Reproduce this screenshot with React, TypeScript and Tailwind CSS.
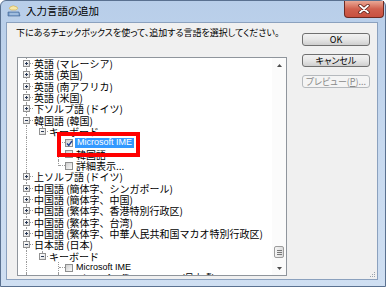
import React from 'react';

type Kind = 'plus' | 'minus' | 'check' | 'checked';
interface Row {
  level: number;
  text: string;
  kind: Kind;
  selected?: boolean;
  last?: boolean;
}

const rows: Row[] = [
  { level: 0, text: '英語 (マレーシア)', kind: 'plus' },
  { level: 0, text: '英語 (英国)', kind: 'plus' },
  { level: 0, text: '英語 (南アフリカ)', kind: 'plus' },
  { level: 0, text: '英語 (米国)', kind: 'plus' },
  { level: 0, text: '下ソルブ語 (ドイツ)', kind: 'plus' },
  { level: 0, text: '韓国語 (韓国)', kind: 'minus' },
  { level: 1, text: 'キーボード', kind: 'minus' },
  { level: 2, text: 'Microsoft IME', kind: 'checked', selected: true },
  { level: 2, text: '韓国語', kind: 'check' },
  { level: 2, text: '詳細表示...', kind: 'check', last: true },
  { level: 0, text: '上ソルブ語 (ドイツ)', kind: 'plus' },
  { level: 0, text: '中国語 (簡体字、シンガポール)', kind: 'plus' },
  { level: 0, text: '中国語 (簡体字、中国)', kind: 'plus' },
  { level: 0, text: '中国語 (繁体字、香港特別行政区)', kind: 'plus' },
  { level: 0, text: '中国語 (繁体字、台湾)', kind: 'plus' },
  { level: 0, text: '中国語 (繁体字、中華人民共和国マカオ特別行政区)', kind: 'plus' },
  { level: 0, text: '日本語 (日本)', kind: 'minus' },
  { level: 1, text: 'キーボード', kind: 'minus' },
  { level: 2, text: 'Microsoft IME', kind: 'check' },
  { level: 2, text: 'Microsoft Office IME 2007 (日本語)', kind: 'check' },
];

function Expander({ open }: { open: boolean }) {
  return (
    <span className="absolute top-[2px] w-[7px] h-[7px] border border-[#919191] bg-gradient-to-br from-white to-[#dedede] flex items-center justify-center">
      <span className="absolute left-[1px] top-[2px] w-[3px] h-[1px] bg-[#2b3a55]" />
      {!open && <span className="absolute left-[2px] top-[1px] w-[1px] h-[3px] bg-[#2b3a55]" />}
    </span>
  );
}

function Check({ checked }: { checked: boolean }) {
  return (
    <span className="relative shrink-0 w-[8px] h-[8px] border border-[#8e8f8f] bg-gradient-to-br from-[#cfcfcf] to-[#fafafa] flex items-center justify-center">
      {checked && (
        <svg width="7" height="7" viewBox="0 0 7 7" className="absolute left-0 top-0">
          <path d="M1 3.5 L2.8 5.5 L6 1" stroke="#1f3f8f" strokeWidth="1.4" fill="none" />
        </svg>
      )}
    </span>
  );
}

function TreeRow({ row }: { row: Row }) {
  const dot = 'absolute border-dotted border-[#9a9a9a]';
  const latin = "font-['Liberation_Sans','Noto_Sans_CJK_JP',sans-serif] text-[9px]";
  return (
    <div className="relative h-[11.33px] shrink-0 flex items-center whitespace-nowrap text-[10px] leading-[11px] text-black [font-feature-settings:normal]">
      {/* level 0 vertical line */}
      <span className={`${dot} left-[8px] top-0 bottom-0 border-l`} />
      {row.level === 0 && (
        <>
          <span className={`${dot} left-[9px] top-[5px] w-[6px] border-t`} />
          <span className="absolute left-[5px] top-0 h-full">
            <Expander open={row.kind === 'minus'} />
          </span>
        </>
      )}
      {row.level === 1 && (
        <>
          <span className={`${dot} left-[24px] top-0 h-[6px] border-l`} />
          <span className={`${dot} left-[25px] top-[5px] w-[5px] border-t`} />
          <span className="absolute left-[21px] top-0 h-full">
            <Expander open={row.kind === 'minus'} />
          </span>
        </>
      )}
      {row.level === 2 && (
        <>
          <span className={`${dot} left-[40px] top-0 ${row.last ? 'h-[6px]' : 'bottom-0'} border-l`} />
          <span className={`${dot} left-[41px] top-[5px] w-[6px] border-t`} />
        </>
      )}
      {row.level === 0 && <span className="pl-[16px]">{row.text}</span>}
      {row.level === 1 && <span className="pl-[31px]">{row.text}</span>}
      {row.level === 2 && (
        <span className="pl-[47px] flex items-center h-full">
          <Check checked={row.kind === 'checked'} />
          {row.selected ? (
            <span className={`ml-[2px] h-[10px] px-[2px] flex items-center bg-[#3399ff] text-white ${latin}`}>
              {row.text}
            </span>
          ) : (
            <span className={`ml-[3px] ${row.text.startsWith('Microsoft') ? latin : ''}`}>{row.text}</span>
          )}
        </span>
      )}
    </div>
  );
}

function Arrow({ up }: { up: boolean }) {
  return (
    <div className="h-[14px] shrink-0 flex items-center justify-center">
      <svg width="5" height="3" viewBox="0 0 5 3">
        {up ? <path d="M0 3 L2.5 0 L5 3 Z" fill="#4d4d4d" /> : <path d="M0 0 L2.5 3 L5 0 Z" fill="#4d4d4d" />}
      </svg>
    </div>
  );
}

function Button({ children, disabled }: { children: React.ReactNode; disabled?: boolean }) {
  return disabled ? (
    <div className="w-[68px] h-[13px] rounded-[3px] border border-[#b5b9bd] bg-[#f4f4f4] flex items-center justify-center text-[9px] leading-none text-[#8a8a8a]">
      {children}
    </div>
  ) : (
    <div className="w-[68px] h-[13px] rounded-[3px] border border-[#707070] bg-gradient-to-b from-[#f2f2f2] via-[#e6e6e6] to-[#cfcfcf] flex items-center justify-center text-[9px] leading-none text-black">
      {children}
    </div>
  );
}

export default function App() {
  return (
    <div className="w-[386px] h-[287px] overflow-hidden bg-white">
      <div className="relative w-[386px] h-[287px] flex flex-col rounded-t-[6px] border border-[#5a7190] bg-gradient-to-b from-[#b8cee9] via-[#c7d9ef] to-[#cfdff2] font-['Noto_Sans_CJK_JP',sans-serif] [font-feature-settings:'palt']">
        {/* Title bar */}
        <div className="h-[21px] shrink-0 flex items-start">
          <div className="flex-1 h-[21px] flex items-center pl-[6px] gap-[5px]">
            <svg width="14" height="13" viewBox="0 0 14 13">
              <path d="M3 2 Q6 -0.5 10 2 Q12 3.5 9 5 L4 5 Q1 4 3 2 Z" fill="#f6e7a8" stroke="#c9a94a" strokeWidth="0.6" />
              <path d="M1 7 L12 7 L13 11 L1 11 Z" fill="#6f98c8" stroke="#3d5f8d" strokeWidth="0.6" />
              <path d="M2.5 8.3 H11.5 M2.5 9.7 H11.5" stroke="#d7e6f7" strokeWidth="0.6" />
            </svg>
            <span className="text-[10.5px] leading-none text-black">入力言語の追加</span>
          </div>
          <div className="mr-[1px] w-[40px] h-[17px] rounded-b-[4px] border border-t-0 border-[#6e2a22] bg-gradient-to-b from-[#e9a896] via-[#d0604e] to-[#c8503f] flex items-center justify-center">
            <svg width="12" height="10" viewBox="0 0 12 10">
              <path d="M2 1.5 L10 8.5 M10 1.5 L2 8.5" stroke="#5a1d16" strokeWidth="3.4" strokeLinecap="round" />
              <path d="M2 1.5 L10 8.5 M10 1.5 L2 8.5" stroke="#ffffff" strokeWidth="1.8" strokeLinecap="round" />
            </svg>
          </div>
        </div>

        {/* Client area */}
        <div className="relative flex-1 ml-[5px] mr-[7px] mb-[6px] border border-[#8ba1be] bg-[#f0f0f0] flex pl-[10px] pt-[4px]">
          <div className="w-[270px] flex flex-col">
            <div className="h-[12px] -ml-[1px] text-[9px] leading-[12px] text-black whitespace-nowrap">
              下にあるチェックボックスを使って、追加する言語を選択してください。
            </div>
            <div className="mt-[18px] h-[219px] border border-[#8f959c] bg-white flex overflow-hidden">
              <div className="flex-1 overflow-hidden flex flex-col">
                {rows.map((r, i) => (
                  <TreeRow key={i} row={r} />
                ))}
              </div>
              <div className="w-[14px] shrink-0 bg-[#fbfbfb] flex flex-col">
                <Arrow up />
                <div className="flex-1" />
                <div className="h-[12px] mx-[2px] rounded-[2px] border border-[#9c9c9c] bg-gradient-to-r from-[#f5f5f5] to-[#dcdcdc] flex flex-col items-center justify-center gap-[1px]">
                  <span className="w-[5px] h-[1px] bg-[#777]" />
                  <span className="w-[5px] h-[1px] bg-[#777]" />
                  <span className="w-[5px] h-[1px] bg-[#777]" />
                </div>
                <div className="h-[3px]" />
                <Arrow up={false} />
              </div>
            </div>
          </div>
          <div className="ml-[15px] pt-[6px] flex flex-col gap-[8px]">
            <Button>OK</Button>
            <Button>キャンセル</Button>
            <Button disabled>
              <span>
                プレビュー(<span className="underline">P</span>)...
              </span>
            </Button>
          </div>
          <svg width="6" height="6" viewBox="0 0 6 6" className="absolute right-[1px] bottom-[1px]">
            <rect x="4" y="0" width="1" height="1" fill="#9aa3ad" />
            <rect x="2" y="2" width="1" height="1" fill="#9aa3ad" />
            <rect x="4" y="2" width="1" height="1" fill="#9aa3ad" />
            <rect x="0" y="4" width="1" height="1" fill="#9aa3ad" />
            <rect x="2" y="4" width="1" height="1" fill="#9aa3ad" />
            <rect x="4" y="4" width="1" height="1" fill="#9aa3ad" />
          </svg>
        </div>

        {/* Annotation highlight */}
        <div className="absolute left-[56px] top-[131px] w-[83px] h-[25px] border-[4px] border-[#ff0000]" />
      </div>
    </div>
  );
}
